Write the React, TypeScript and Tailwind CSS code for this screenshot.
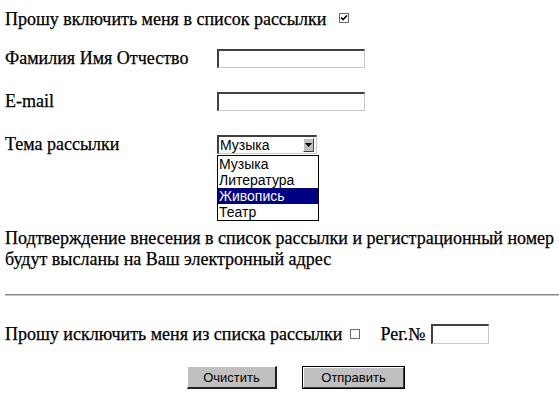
import React from "react";

function TextBox({ w }: { w: string }) {
  return (
    <span
      className={`block h-[19px] ${w} bg-white border-t-2 border-l-2 border-t-[#404040] border-l-[#404040] border-r border-b border-r-[#c8c8c8] border-b-[#c8c8c8]`}
    />
  );
}

function Check({ on }: { on?: boolean }) {
  return (
    <span className="inline-flex h-[10px] w-[10px] items-center justify-center border border-[#6b6b6b] bg-white">
      {on && (
        <svg width="8" height="8" viewBox="0 0 8 8">
          <path d="M1 3.5 L3 5.5 L7 1.5" stroke="#000" strokeWidth="1.6" fill="none" />
        </svg>
      )}
    </span>
  );
}

const topics = ["Музыка", "Литература", "Живопись", "Театр"];

export default function App() {
  return (
    <div className="w-[559px] h-[395px] bg-white font-['Liberation_Serif',serif] text-[18px] text-black leading-[19px] overflow-hidden [-webkit-text-stroke:0.25px_black]">
      <div className="pl-[5px] pt-[10px]">
        <div className="flex h-[19px] items-start">
          <span>Прошу включить меня в список рассылки</span>
          <span className="ml-[13px] mt-[3px] flex">
            <Check on />
          </span>
        </div>

        <div className="mt-[20px] flex h-[19px] items-center">
          <span className="w-[212px]">Фамилия Имя Отчество</span>
          <TextBox w="w-[148px]" />
        </div>

        <div className="mt-[24px] flex h-[19px] items-center">
          <span className="w-[212px]">E-mail</span>
          <TextBox w="w-[148px]" />
        </div>

        <div className="mt-[24px] flex h-[19px] items-center">
          <span className="w-[212px]">Тема рассылки</span>
          <div className="relative font-['Liberation_Sans',sans-serif] text-[14px] [-webkit-text-stroke:0px]">
            <div className="flex h-[19px] w-[100px] items-center justify-between bg-white border-t-2 border-l-2 border-t-[#404040] border-l-[#404040] border-r border-b border-r-[#c8c8c8] border-b-[#c8c8c8] leading-none">
              <span className="pl-[1px]">Музыка</span>
              <span className="mr-[2px] flex h-[14px] w-[11px] items-center justify-center bg-[#c0c0c0] border-t border-l border-t-white border-l-white border-r border-b border-r-[#404040] border-b-[#404040]">
                <svg width="7" height="4" viewBox="0 0 7 4">
                  <path d="M0 0 H7 L3.5 4 Z" fill="#000" />
                </svg>
              </span>
            </div>
            <div className="absolute left-0 top-[20px] w-[102px] border border-black bg-white leading-[16px]">
              {topics.map((t) => (
                <div
                  key={t}
                  className={`h-[16px] pl-[1px] ${t === "Живопись" ? "bg-[#000080] text-white" : "text-black"}`}
                >
                  {t}
                </div>
              ))}
            </div>
          </div>
        </div>

        <p className="mt-[74px] leading-[21px] pr-[4px]">
          Подтверждение внесения в список рассылки и регистрационный номер будут высланы на Ваш электронный адрес
        </p>
      </div>

      <div className="ml-[5px] mt-[24px] border-t border-b border-t-[#8a8a8a] border-b-[#c4c4c4]" />

      <div className="pl-[5px]">
        <div className="mt-[28px] flex h-[20px] items-center">
          <span>Прошу исключить меня из списка рассылки</span>
          <span className="ml-[8px] flex">
            <Check />
          </span>
          <span className="ml-[20px]">Рег.№</span>
          <span className="ml-[6px]">
            <span className="block h-[20px] w-[58px] bg-white border-t-2 border-l-2 border-t-[#404040] border-l-[#404040] border-r border-b border-r-[#c8c8c8] border-b-[#c8c8c8]" />
          </span>
        </div>

        <div className="mt-[22px] ml-[182px] flex gap-[25px] font-['Liberation_Sans',sans-serif] text-[13px] [-webkit-text-stroke:0px]">
          <button className="h-[23px] w-[90px] bg-[#c0c0c0] border-t border-l border-t-white border-l-white border-r-2 border-b-2 border-r-[#202020] border-b-[#202020] text-black">
            Очистить
          </button>
          <button className="h-[23px] w-[103px] border border-black bg-[#c0c0c0] p-0">
            <span className="flex h-full w-full items-center justify-center border-t border-l border-t-white border-l-white border-r border-b border-r-[#404040] border-b-[#404040] text-black">
              Отправить
            </span>
          </button>
        </div>
      </div>
    </div>
  );
}
